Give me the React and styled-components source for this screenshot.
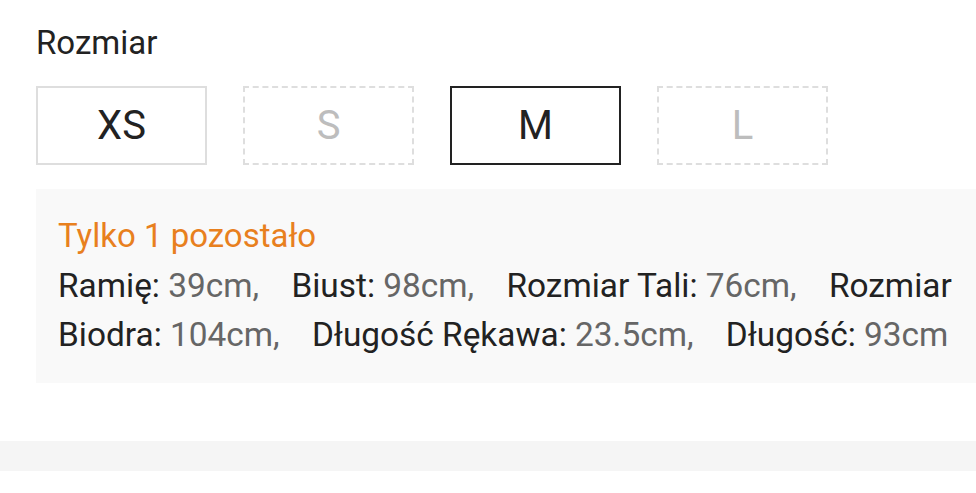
import React from 'react';
import styled, { createGlobalStyle } from 'styled-components';

const GlobalStyle = createGlobalStyle`
    body {
        margin: 0;
        background: #fff;
        font-family: Roboto, "Liberation Sans", sans-serif;
        color: #222;
        overflow: hidden;
    }
`;

const sizes = [
    { label: 'XS', state: 'normal' },
    { label: 'S', state: 'disabled' },
    { label: 'M', state: 'active' },
    { label: 'L', state: 'disabled' },
];

const measures = [
    { name: 'Ramię', value: '39cm' },
    { name: 'Biust', value: '98cm' },
    { name: 'Rozmiar Tali', value: '76cm' },
    { name: 'Rozmiar Biodra', value: '104cm' },
    { name: 'Długość Rękawa', value: '23.5cm' },
    { name: 'Długość', value: '93cm', last: true },
];

const App = () => {
    return (
        <>
            <GlobalStyle />
            <Page>
                <Section>
                    <Title>Rozmiar</Title>
                    <SizeRow>
                        {sizes.map((s) => (
                            <SizeButton key={s.label} $state={s.state}>
                                {s.label}
                            </SizeButton>
                        ))}
                    </SizeRow>
                    <InfoPanel>
                        <Stock>Tylko 1 pozostało</Stock>
                        <Measures>
                            {measures.map((m) => (
                                <React.Fragment key={m.name}>
                                    <Label>{m.name}: </Label>
                                    <Value $last={m.last}>
                                        {m.value}
                                        {m.last ? '' : ','}
                                    </Value>{' '}
                                </React.Fragment>
                            ))}
                        </Measures>
                    </InfoPanel>
                </Section>
                <BottomBar />
            </Page>
        </>
    );
};

const Page = styled.div`
    width: 976px;
    height: 493px;
    overflow: hidden;
    display: flex;
    flex-direction: column;
`;

const Section = styled.section`
    padding: 22px 0 0 36px;
`;

const Title = styled.div`
    font-size: 33px;
    line-height: 42px;
    color: #222;
`;

const SizeRow = styled.div`
    display: flex;
    gap: 36px;
    margin-top: 22px;
`;

const SizeButton = styled.div`
    box-sizing: border-box;
    width: 171px;
    height: 79px;
    display: flex;
    align-items: center;
    justify-content: center;
    font-size: 40px;
    border: 2px ${(p) => (p.$state === 'disabled' ? 'dashed' : 'solid')}
        ${(p) => (p.$state === 'active' ? '#222' : '#dedede')};
    color: ${(p) => (p.$state === 'disabled' ? '#bdbdbd' : '#222')};
`;

const InfoPanel = styled.div`
    margin-top: 24px;
    background: #f9f9f9;
    padding: 22px 0 0 22px;
    width: 960px;
    box-sizing: border-box;
    height: 194px;
`;

const Stock = styled.div`
    font-size: 33px;
    line-height: 50px;
    color: #e8801e;
`;

const Measures = styled.div`
    font-size: 33.4px;
    line-height: 49px;
    color: #222;
    width: 905px;
`;

const Label = styled.span`
    color: #222;
`;

const Value = styled.span`
    color: #666;
    margin-right: ${(p) => (p.$last ? '0' : '24px')};
`;

const BottomBar = styled.div`
    margin-top: 58px;
    height: 30px;
    background: #f5f5f5;
`;

export default App;
